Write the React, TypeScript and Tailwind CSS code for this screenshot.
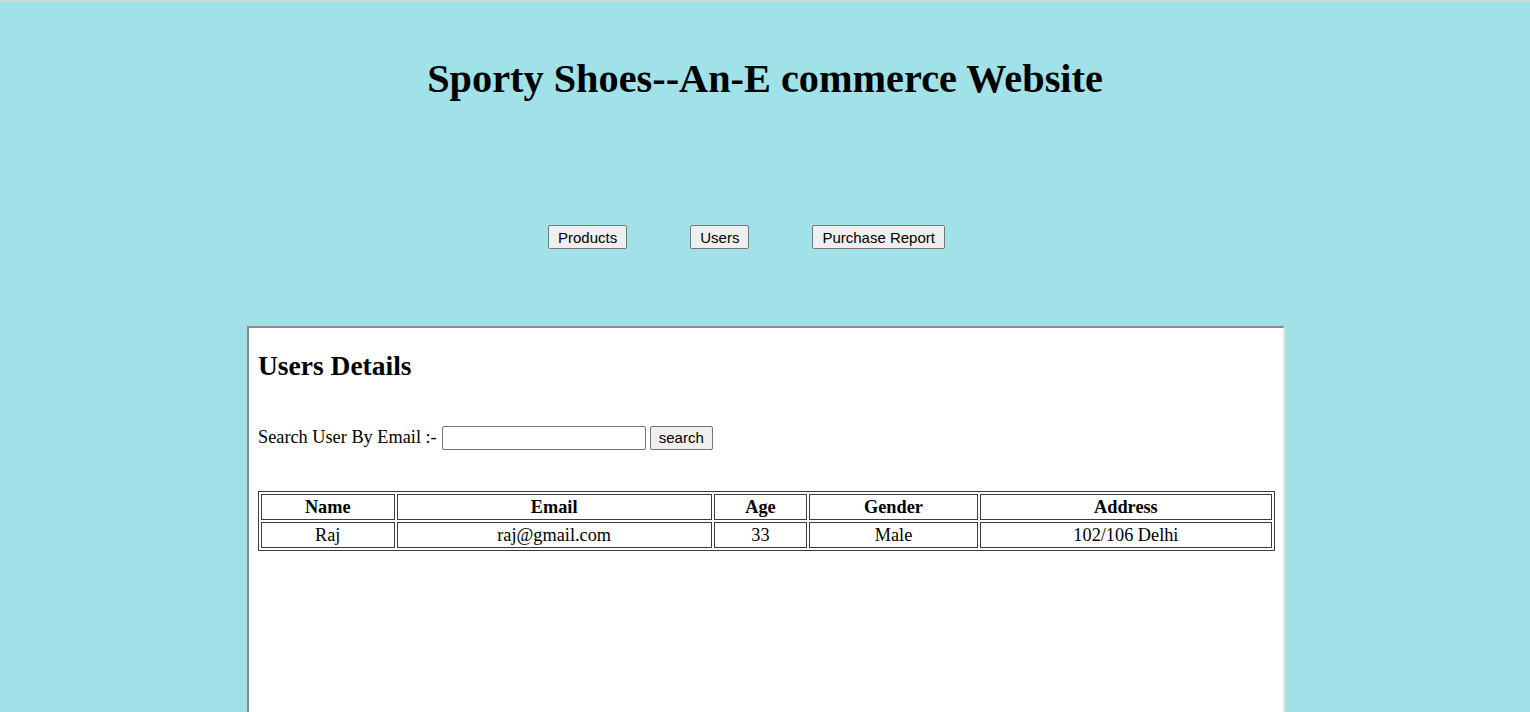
const columns = [
  { label: "Name", width: "w-[133px]" },
  { label: "Email", width: "w-[314px]" },
  { label: "Age", width: "w-[93px]" },
  { label: "Gender", width: "w-[168px]" },
  { label: "Address", width: "w-[291px]" },
];

const users = [
  { name: "Raj", email: "raj@gmail.com", age: 33, gender: "Male", address: "102/106 Delhi" },
];

function NavButton({ label }: { label: string }) {
  return (
    <button className="h-6 px-[9px] bg-[#efefef] border border-[#767676] rounded-[2px] text-[15px] leading-none text-black font-['Liberation_Sans',Arial,sans-serif]">
      {label}
    </button>
  );
}

export default function App() {
  return (
    <div className="min-h-[712px] bg-[#a0e2e8] border-t-2 border-[#c9dcdc] font-['Liberation_Serif','Times_New_Roman',serif] text-black overflow-hidden">
      {/* Header */}
      <h1 className="text-center text-[40.3px] font-bold leading-[46px] pt-[54px]">
        Sporty Shoes--An-E commerce Website
      </h1>

      {/* Nav */}
      <div className="flex justify-center gap-[63px] mt-[123px] pr-[37px]">
        <NavButton label="Products" />
        <NavButton label="Users" />
        <NavButton label="Purchase Report" />
      </div>

      {/* Users frame */}
      <div className="ml-[247px] w-[1038px] h-[420px] mt-[77px] bg-white border-2 border-t-[#8a8a8a] border-l-[#8a8a8a] border-r-[#e6e6e6] border-b-[#e6e6e6] px-[9px]">
        <h2 className="text-[27.5px] font-bold leading-[32px] mt-[22px]">Users Details</h2>

        <div className="flex items-center mt-[42px] text-[18.3px]">
          <span>Search User By Email :-</span>
          <input className="ml-[5px] w-[204px] h-[24px] border border-[#767676] rounded-[2px] bg-white" />
          <button className="ml-[4px] h-[24px] px-[8px] bg-[#efefef] border border-[#767676] rounded-[2px] text-[15px] leading-none font-['Liberation_Sans',Arial,sans-serif]">
            search
          </button>
        </div>

        <table className="mt-[40px] w-[1017px] border-separate border-spacing-[2px] border border-[#3c3c3c] text-[18.3px]">
          <thead>
            <tr>
              {columns.map((c) => (
                <th
                  key={c.label}
                  className={`${c.width} h-[26px] p-0 font-bold text-center border border-[#3c3c3c] leading-[22px]`}
                >
                  {c.label}
                </th>
              ))}
            </tr>
          </thead>
          <tbody>
            {users.map((u) => (
              <tr key={u.email}>
                {[u.name, u.email, u.age, u.gender, u.address].map((v, i) => (
                  <td
                    key={i}
                    className="h-[26px] p-0 text-center border border-[#3c3c3c] leading-[22px]"
                  >
                    {v}
                  </td>
                ))}
              </tr>
            ))}
          </tbody>
        </table>
      </div>
    </div>
  );
}
